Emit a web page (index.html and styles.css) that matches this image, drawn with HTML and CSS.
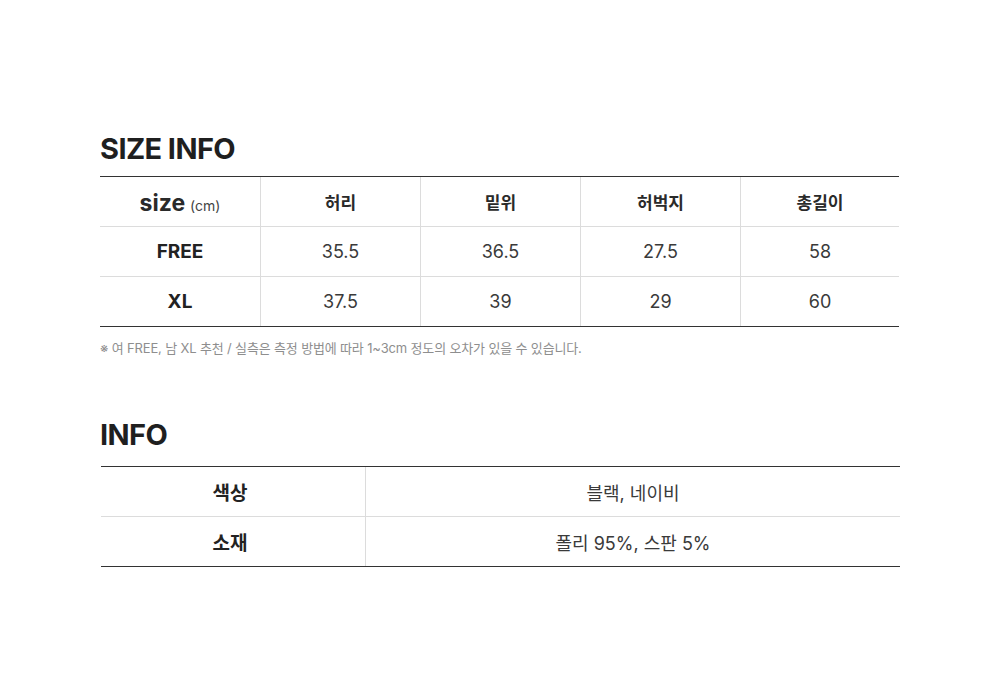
FILE: index.html
```html
<!DOCTYPE html>
<html lang="ko">
<head>
<meta charset="utf-8">
<link rel="stylesheet" href="styles.css">
</head>
<body>
<div class="page">
  <section class="size-section">
    <h2 class="title">SIZE INFO</h2>
    <div class="size-table">
      <div class="row head">
        <div class="cell first"><span class="size-word">size</span><span class="unit">(cm)</span></div>
        <div class="cell">허리</div>
        <div class="cell">밑위</div>
        <div class="cell">허벅지</div>
        <div class="cell">총길이</div>
      </div>
      <div class="row">
        <div class="cell first label">FREE</div>
        <div class="cell">35.5</div>
        <div class="cell">36.5</div>
        <div class="cell">27.5</div>
        <div class="cell">58</div>
      </div>
      <div class="row">
        <div class="cell first label">XL</div>
        <div class="cell">37.5</div>
        <div class="cell">39</div>
        <div class="cell">29</div>
        <div class="cell">60</div>
      </div>
    </div>
    <p class="note">※ 여 FREE, 남 XL 추천 / 실측은 측정 방법에 따라 1~3cm 정도의 오차가 있을 수 있습니다.</p>
  </section>
  <section class="info-section">
    <h2 class="title">INFO</h2>
    <div class="info-table">
      <div class="irow">
        <div class="icell key">색상</div>
        <div class="icell val">블랙, 네이비</div>
      </div>
      <div class="irow">
        <div class="icell key">소재</div>
        <div class="icell val">폴리 95%, 스판 5%</div>
      </div>
    </div>
  </section>
</div>
</body>
</html>
```
FILE: styles.css
```css
* { box-sizing: border-box; }
html, body { margin: 0; padding: 0; background: #fff; }
body {
  font-family: Inter, "Noto Sans CJK KR", sans-serif;
  color: #222;
  width: 1000px;
  height: 700px;
  overflow: hidden;
}
.page { padding: 131px 100px 0 100px; }
.title {
  margin: 0;
  font-size: 29px;
  font-weight: 700;
  letter-spacing: -0.6px;
  line-height: 36px;
  color: #1f1f1f;
}
.size-table {
  margin-top: 9px;
  width: 799px;
  border-top: 1px solid #333;
  border-bottom: 1px solid #333;
}
.row {
  display: grid;
  grid-template-columns: 160px 160px 160px 160px 159px;
  height: 50px;
}
.row.head { height: 49px; }
.row + .row { border-top: 1px solid #dcdcdc; }
.cell {
  display: flex;
  align-items: center;
  justify-content: center;
  font-size: 18px;
  color: #3a3a3a;
  border-left: 1px solid #dcdcdc;
}
.cell.first { border-left: none; }
.head .cell { font-weight: 700; font-size: 17px; color: #2a2a2a; }
.head .cell.first { align-items: baseline; padding-top: 12px; }
.size-word { font-size: 23px; font-weight: 700; color: #2a2a2a; }
.unit { font-size: 14px; font-weight: 400; margin-left: 5px; color: #444; }
.label { font-weight: 700; font-size: 19px; color: #222; }
.note {
  margin: 12px 0 0 0;
  font-size: 13px;
  color: #8e8e8e;
  letter-spacing: -0.15px;
  line-height: 18px;
}
.info-section { margin-top: 60px; }
.info-table {
  margin-top: 13px;
  margin-left: 1px;
  width: 799px;
  border-top: 1px solid #333;
  border-bottom: 1px solid #333;
}
.irow {
  display: grid;
  grid-template-columns: 264px 535px;
  height: 50px;
}
.irow:first-child { height: 49px; }
.irow + .irow { border-top: 1px solid #dcdcdc; }
.icell {
  display: flex;
  align-items: center;
  justify-content: center;
}
.key { font-size: 19px; font-weight: 700; color: #222; padding-right: 6px; }
.val { font-size: 18px; color: #3a3a3a; border-left: 1px solid #dcdcdc; }
```
